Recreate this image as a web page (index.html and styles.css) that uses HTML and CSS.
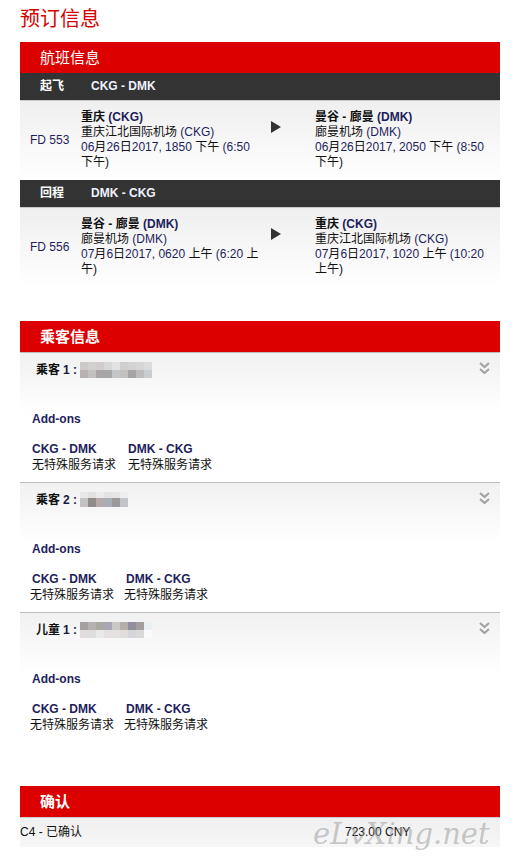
FILE: index.html
```html
<!DOCTYPE html>
<html lang="zh">
<head>
<meta charset="utf-8">
<title>预订信息</title>
<link rel="stylesheet" href="styles.css">
</head>
<body>
<div class="page">
  <h1 class="title">预订信息</h1>

  <section class="block">
    <div class="block-head">航班信息</div>

    <div class="leg-bar"><span class="leg-label">起飞</span><span class="leg-route">CKG - DMK</span></div>
    <div class="flight">
      <div class="flight-no"><span class="en">FD 553</span></div>
      <div class="stop">
        <div class="city">重庆 <span class="en">(CKG)</span></div>
        <div>重庆江北国际机场 <span class="en">(CKG)</span></div>
        <div><span class="en">06</span>月<span class="en">26</span>日<span class="en">2017, 1850</span> 下午 <span class="en">(6:50</span> 下午)</div>
      </div>
      <div class="arrow"><svg width="10" height="12" viewBox="0 0 10 12"><polygon points="0,0 10,6 0,12" fill="#333"/></svg></div>
      <div class="stop">
        <div class="city">曼谷 - 廊曼 <span class="en">(DMK)</span></div>
        <div>廊曼机场 <span class="en">(DMK)</span></div>
        <div><span class="en">06</span>月<span class="en">26</span>日<span class="en">2017, 2050</span> 下午 <span class="en">(8:50</span> 下午)</div>
      </div>
    </div>

    <div class="leg-bar"><span class="leg-label">回程</span><span class="leg-route">DMK - CKG</span></div>
    <div class="flight">
      <div class="flight-no"><span class="en">FD 556</span></div>
      <div class="stop">
        <div class="city">曼谷 - 廊曼 <span class="en">(DMK)</span></div>
        <div>廊曼机场 <span class="en">(DMK)</span></div>
        <div><span class="en">07</span>月<span class="en">6</span>日<span class="en">2017, 0620</span> 上午 <span class="en">(6:20</span> 上午)</div>
      </div>
      <div class="arrow"><svg width="10" height="12" viewBox="0 0 10 12"><polygon points="0,0 10,6 0,12" fill="#333"/></svg></div>
      <div class="stop">
        <div class="city">重庆 <span class="en">(CKG)</span></div>
        <div>重庆江北国际机场 <span class="en">(CKG)</span></div>
        <div><span class="en">07</span>月<span class="en">6</span>日<span class="en">2017, 1020</span> 上午 <span class="en">(10:20</span> 上午)</div>
      </div>
    </div>
  </section>

  <section class="block block--pax">
    <div class="block-head block-head--bold">乘客信息</div>

    <div class="pax">
      <div class="pax-name">乘客 <span class="en">1 :</span>
        <svg class="blur" width="72" height="16" viewBox="0 0 72 16">
          <rect x="0" y="0" width="8" height="8" fill="#cdc9c9"/><rect x="8" y="0" width="8" height="8" fill="#d3d0d0"/><rect x="16" y="0" width="8" height="8" fill="#d1cdcd"/><rect x="24" y="0" width="8" height="8" fill="#d8d8d8"/><rect x="32" y="0" width="8" height="8" fill="#e2e2e2"/><rect x="40" y="0" width="8" height="8" fill="#d0cece"/><rect x="48" y="0" width="8" height="8" fill="#d4d2d2"/><rect x="56" y="0" width="8" height="8" fill="#d6d6d6"/><rect x="64" y="0" width="8" height="8" fill="#dcdcdc"/>
          <rect x="0" y="8" width="8" height="8" fill="#b8b1b1"/><rect x="8" y="8" width="8" height="8" fill="#c3c0c0"/><rect x="16" y="8" width="8" height="8" fill="#aaa5a5"/><rect x="24" y="8" width="8" height="8" fill="#a9a6a8"/><rect x="32" y="8" width="8" height="8" fill="#c2c6c8"/><rect x="40" y="8" width="8" height="8" fill="#c5c1c0"/><rect x="48" y="8" width="8" height="8" fill="#a7a3a5"/><rect x="56" y="8" width="8" height="8" fill="#bebcbd"/><rect x="64" y="8" width="8" height="8" fill="#c9cdd1"/>
        </svg>
      </div>
      <svg class="chev" width="11" height="12" viewBox="0 0 11 12"><path d="M1 1 L5.5 5 L10 1 M1 7 L5.5 11 L10 7" fill="none" stroke="#a3a3a3" stroke-width="2.2"/></svg>
      <div class="addons"><span class="en">Add-ons</span></div>
      <div class="segs">
        <div class="seg"><div class="seg-route en">CKG - DMK</div><div>无特殊服务请求</div></div>
        <div class="seg"><div class="seg-route en">DMK - CKG</div><div>无特殊服务请求</div></div>
      </div>
    </div>

    <div class="pax">
      <div class="pax-name">乘客 <span class="en">2 :</span>
        <svg class="blur" width="48" height="16" viewBox="0 0 48 16">
          <rect x="0" y="0" width="8" height="6" fill="#e8e8e8"/><rect x="8" y="0" width="8" height="6" fill="#e2e2e2"/><rect x="16" y="0" width="8" height="6" fill="#ebebeb"/><rect x="24" y="0" width="8" height="6" fill="#e3e3e3"/><rect x="32" y="0" width="8" height="6" fill="#e6e6e6"/><rect x="40" y="0" width="8" height="6" fill="#eeeeee"/>
          <rect x="0" y="6" width="8" height="9" fill="#c2c2c2"/><rect x="8" y="6" width="8" height="9" fill="#918b89"/><rect x="16" y="6" width="8" height="9" fill="#b6a9a9"/><rect x="24" y="6" width="8" height="9" fill="#a9aeb6"/><rect x="32" y="6" width="8" height="9" fill="#9b9999"/><rect x="40" y="6" width="8" height="9" fill="#c1c5c9"/>
        </svg>
      </div>
      <svg class="chev" width="11" height="12" viewBox="0 0 11 12"><path d="M1 1 L5.5 5 L10 1 M1 7 L5.5 11 L10 7" fill="none" stroke="#a3a3a3" stroke-width="2.2"/></svg>
      <div class="addons"><span class="en">Add-ons</span></div>
      <div class="segs segs--alt">
        <div class="seg"><div class="seg-route en">CKG - DMK</div><div>无特殊服务请求</div></div>
        <div class="seg"><div class="seg-route en">DMK - CKG</div><div>无特殊服务请求</div></div>
      </div>
    </div>

    <div class="pax">
      <div class="pax-name">儿童 <span class="en">1 :</span>
        <svg class="blur" width="72" height="16" viewBox="0 0 72 16">
          <rect x="0" y="0" width="8" height="8" fill="#a5a1a1"/><rect x="8" y="0" width="8" height="8" fill="#b5b1b1"/><rect x="16" y="0" width="8" height="8" fill="#aba7a3"/><rect x="24" y="0" width="8" height="8" fill="#a9a7b3"/><rect x="32" y="0" width="8" height="8" fill="#c9c7c7"/><rect x="40" y="0" width="8" height="8" fill="#b5afa9"/><rect x="48" y="0" width="8" height="8" fill="#918f9d"/><rect x="56" y="0" width="8" height="8" fill="#a59d9d"/><rect x="64" y="0" width="8" height="8" fill="#e9f1f3"/>
          <rect x="0" y="8" width="8" height="8" fill="#e1dddd"/><rect x="8" y="8" width="8" height="8" fill="#dddddd"/><rect x="16" y="8" width="8" height="8" fill="#e9e9e9"/><rect x="24" y="8" width="8" height="8" fill="#e5e1e1"/><rect x="32" y="8" width="8" height="8" fill="#e5e1e1"/><rect x="40" y="8" width="8" height="8" fill="#e1dddd"/><rect x="48" y="8" width="8" height="8" fill="#d5d5d9"/><rect x="56" y="8" width="8" height="8" fill="#d9d9d9"/><rect x="64" y="8" width="8" height="8" fill="#fafafa"/>
        </svg>
      </div>
      <svg class="chev" width="11" height="12" viewBox="0 0 11 12"><path d="M1 1 L5.5 5 L10 1 M1 7 L5.5 11 L10 7" fill="none" stroke="#a3a3a3" stroke-width="2.2"/></svg>
      <div class="addons"><span class="en">Add-ons</span></div>
      <div class="segs segs--alt">
        <div class="seg"><div class="seg-route en">CKG - DMK</div><div>无特殊服务请求</div></div>
        <div class="seg"><div class="seg-route en">DMK - CKG</div><div>无特殊服务请求</div></div>
      </div>
    </div>
  </section>

  <section class="block block--confirm">
    <div class="block-head block-head--bold">确认</div>
    <div class="confirm-row">
      <div><span class="en">C4 -</span> 已确认</div>
      <div class="en">723.00 CNY</div>
    </div>
    <div class="watermark">eLvXing.net</div>
  </section>
</div>
</body>
</html>
```

FILE: styles.css
```css
* { box-sizing: border-box; }

body {
  margin: 0;
  background: #fff;
  font-family: "Liberation Sans", "Noto Sans CJK SC", sans-serif;
  font-size: 12px;
  color: #111;
}

.page {
  width: 480px;
  margin-left: 20px;
  padding-top: 7px;
  padding-bottom: 20px;
}

.title {
  margin: 0 0 10px;
  font-size: 20px;
  font-weight: normal;
  line-height: 25px;
  color: #d50000;
}

.en { color: #1e1e5c; }

.block { position: relative; }
.block--pax { margin-top: 34px; }
.block--confirm { margin-top: 44px; }

.block-head {
  background: #dc0000;
  color: #fff;
  height: 31px;
  line-height: 31px;
  padding-left: 20px;
  font-size: 15px;
}
.block-head--bold { font-weight: bold; }

.leg-bar {
  display: flex;
  background: #333;
  color: #fff;
  height: 27px;
  line-height: 27px;
  padding-left: 20px;
  font-weight: bold;
}
.leg-label { width: 51px; }
.leg-route { color: #eef2ff; }

.flight {
  display: grid;
  grid-template-columns: 51px 179px 55px 178px;
  border-top: 1px solid #cacaca;
  background: linear-gradient(#efefef, #fff);
  padding: 9px 0 10px 10px;
  line-height: 15px;
}
.flight-no { align-self: center; }
.city { font-weight: bold; }
.city .en { font-weight: bold; }
.arrow {
  align-self: start;
  padding-left: 11px;
  margin-top: 11px;
  line-height: 0;
}

.pax {
  position: relative;
  border-top: 1px solid #bdbdbd;
  background: linear-gradient(#f1f1f1, #fff 60px);
  padding: 9px 12px 9px 12px;
  line-height: 16px;
}
.pax-name {
  display: flex;
  align-items: center;
  gap: 3px;
  height: 16px;
  padding-left: 4px;
  font-weight: bold;
}
.pax-name .en { color: #1a1a40; }
.blur { display: block; }
.chev {
  position: absolute;
  right: 10px;
  top: 9px;
}
.addons {
  margin-top: 33px;
  font-weight: bold;
}
.segs {
  margin-top: 14px;
  display: grid;
  grid-template-columns: 96px 96px;
}
.segs--alt {
  margin-left: -2px;
  grid-template-columns: 94px 96px;
}
.segs--alt .seg-route { padding-left: 2px; }
.seg-route { font-weight: bold; }

.confirm-row {
  display: grid;
  grid-template-columns: 325px auto;
  height: 30px;
  line-height: 29px;
  border-top: 1px solid #cccccc;
  background: linear-gradient(#efefef, #f7f7f7);
}
.confirm-row .en { color: #111; }

.watermark {
  position: absolute;
  left: 293px;
  top: 30px;
  font-family: "DejaVu Serif", serif;
  font-style: italic;
  font-size: 29px;
  line-height: 36px;
  color: rgba(150, 150, 150, 0.5);
  pointer-events: none;
}
```
